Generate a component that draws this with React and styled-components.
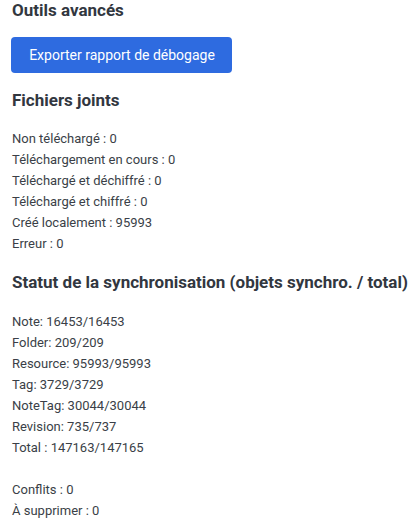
import styled, { createGlobalStyle } from "styled-components";

const GlobalStyle = createGlobalStyle`
  body {
    margin: 0;
    background: #ffffff;
    font-family: Roboto, "Liberation Sans", sans-serif;
  }
`;

const attachmentStats = [
  "Non téléchargé : 0",
  "Téléchargement en cours : 0",
  "Téléchargé et déchiffré : 0",
  "Téléchargé et chiffré : 0",
  "Créé localement : 95993",
  "Erreur : 0",
];

const syncStats = [
  "Note: 16453/16453",
  "Folder: 209/209",
  "Resource: 95993/95993",
  "Tag: 3729/3729",
  "NoteTag: 30044/30044",
  "Revision: 735/737",
  "Total : 147163/147165",
  "",
  "Conflits : 0",
  "À supprimer : 0",
];

export default function App() {
  return (
    <>
      <GlobalStyle />
      <Page>
        <Title>Outils avancés</Title>
        <Button>Exporter rapport de débogage</Button>
        <Title>Fichiers joints</Title>
        <StatList $top={1}>
          {attachmentStats.map((line) => (
            <Line key={line}>{line}</Line>
          ))}
        </StatList>
        <Title>Statut de la synchronisation (objets synchro. / total)</Title>
        <StatList $top={2}>
          {syncStats.map((line, i) => (
            <Line key={i}>{line || "\u00a0"}</Line>
          ))}
        </StatList>
      </Page>
    </>
  );
}

const Page = styled.div`
  display: flex;
  flex-direction: column;
  align-items: flex-start;
  gap: 17px;
  padding: 0 12px;
`;

const Title = styled.h2`
  margin: 0;
  font-size: 17px;
  line-height: 20px;
  font-weight: 700;
  color: #32373f;
  white-space: nowrap;
`;

const Button = styled.button`
  margin-left: -1px;
  width: 221px;
  height: 36px;
  padding: 0 0 0 1px;
  border: none;
  border-radius: 4px;
  background: #2e6be0;
  color: #ffffff;
  font-family: Roboto, "Liberation Sans", sans-serif;
  font-size: 14px;
  cursor: pointer;
`;

const StatList = styled.div`
  display: flex;
  flex-direction: column;
  margin: ${(p) => p.$top}px 0 1px;
`;

const Line = styled.div`
  font-size: 13px;
  line-height: 21px;
  color: #3a3f47;
  white-space: nowrap;
`;
